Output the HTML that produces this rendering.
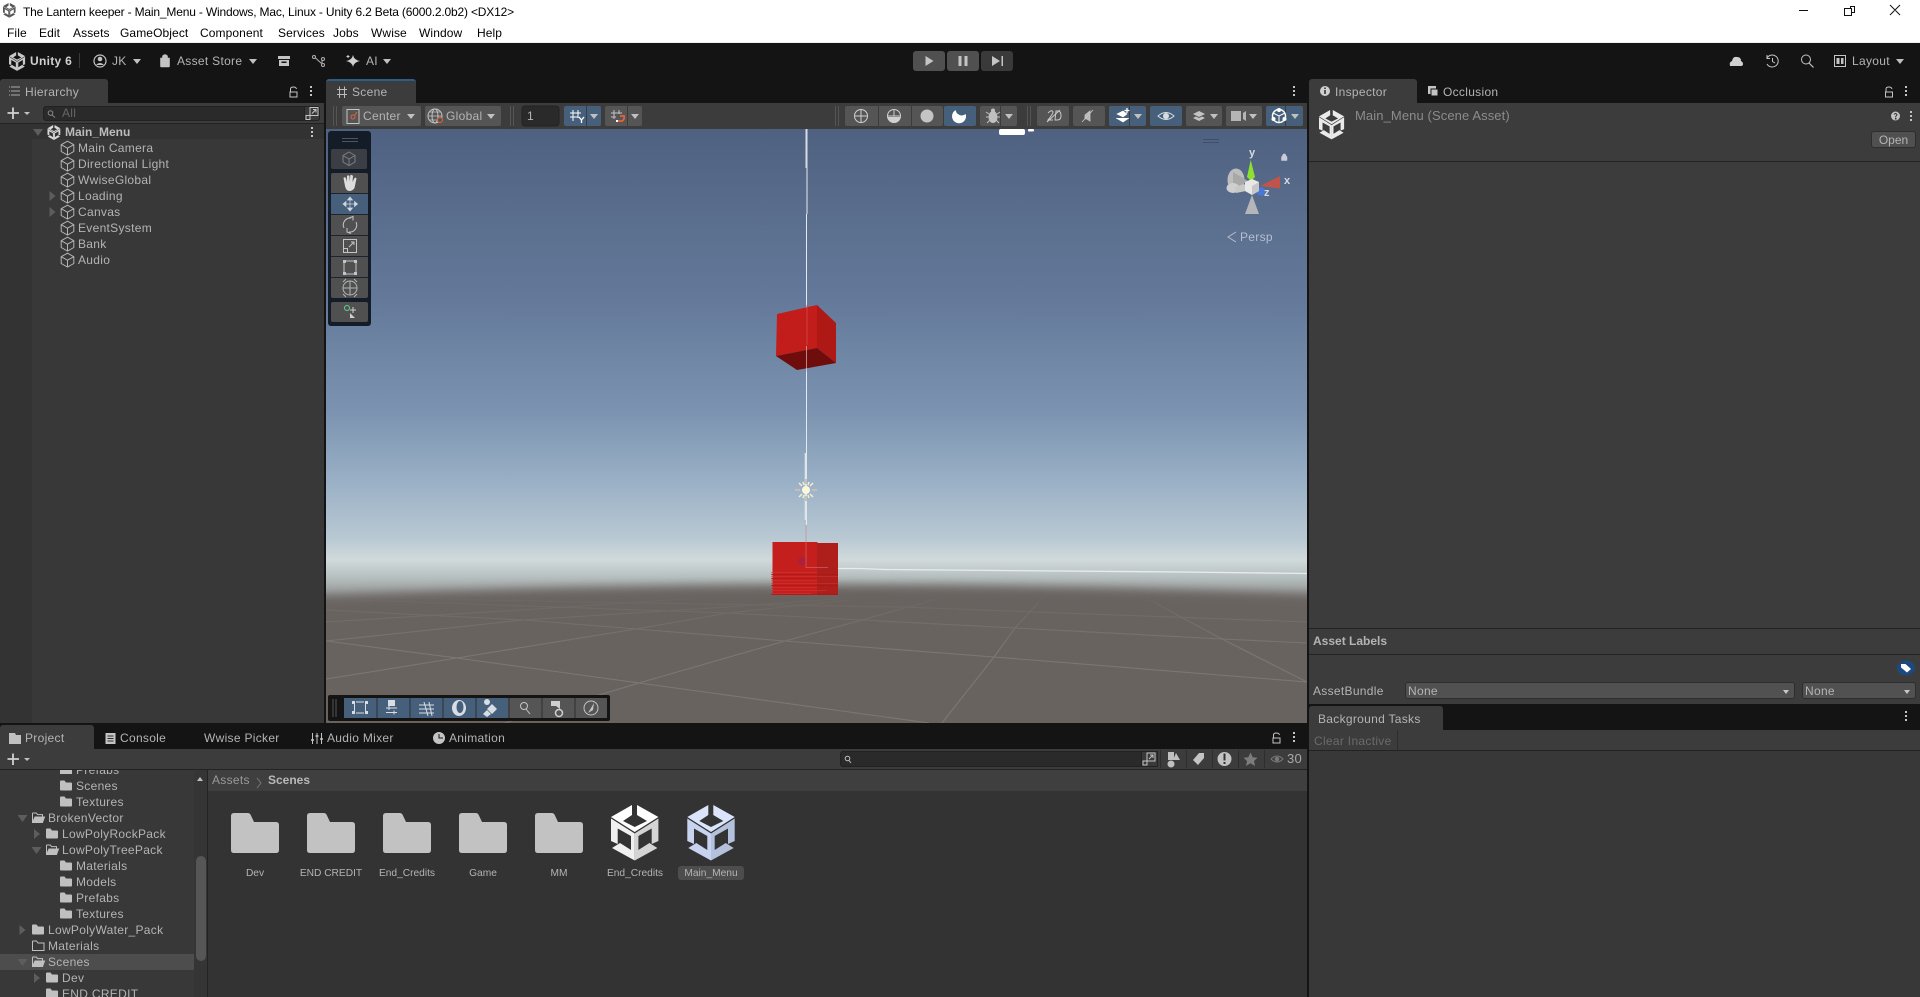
<!DOCTYPE html>
<html><head><meta charset="utf-8"><title>Unity</title>
<style>
html,body{margin:0;padding:0;width:1920px;height:997px;overflow:hidden;background:#141414}
body{position:relative;font:12px/16px "Liberation Sans",sans-serif;color:#b4b4b4}
.b{position:absolute}
.t{position:absolute;white-space:nowrap;line-height:16px;height:16px;letter-spacing:.3px}
.k{color:#000;letter-spacing:.1px}
.g{top:866px;font-size:10.2px;letter-spacing:0;width:100px;text-align:center}
svg{position:absolute;left:0;top:0}
</style></head><body>
<div class="b" style="left:0;top:0;width:1920px;height:42px;background:#fff"></div>
<div class="b" style="left:0;top:42px;width:1920px;height:1px;background:#f0f0f0"></div>
<!-- hierarchy -->
<div class="b" style="left:0;top:79px;width:108px;height:24px;background:#3c3c3c;border-radius:3px 3px 0 0"></div>
<div class="b" style="left:0;top:103px;width:324px;height:620px;background:#383838"></div>
<div class="b" style="left:0;top:103px;width:324px;height:20px;background:#3c3c3c"></div>
<div class="b" style="left:0;top:123px;width:324px;height:1px;background:#232323"></div>
<div class="b" style="left:0;top:139px;width:32px;height:584px;background:#333"></div>
<div class="b" style="left:0;top:124px;width:324px;height:15px;background:#323232"></div>
<div class="b" style="left:43px;top:106px;width:277px;height:15px;background:#2a2a2a;border:1px solid #222;box-sizing:border-box;border-radius:3px"></div>
<div class="b" style="left:304px;top:106px;width:16px;height:15px;background:#3a3a3a;border:1px solid #222;box-sizing:border-box;border-radius:0 3px 3px 0"></div>
<!-- scene tab -->
<div class="b" style="left:326px;top:79px;width:90px;height:24px;background:#3c3c3c;border-radius:3px 3px 0 0;border-top:2px solid #2c5d87;box-sizing:border-box"></div>
<div class="b" style="left:326px;top:103px;width:981px;height:26px;background:#3c3c3c"></div>
<!-- project -->
<div class="b" style="left:0;top:725px;width:94px;height:24px;background:#3c3c3c;border-radius:3px 3px 0 0"></div>
<div class="b" style="left:0;top:749px;width:1307px;height:20px;background:#3c3c3c"></div>
<div class="b" style="left:0;top:769px;width:1307px;height:1px;background:#232323"></div>
<div class="b" style="left:0;top:770px;width:208px;height:227px;background:#383838"></div>
<div class="b" style="left:194px;top:770px;width:13px;height:227px;background:#353535"></div>
<div class="b" style="left:207px;top:770px;width:1px;height:227px;background:#232323"></div>
<div class="b" style="left:208px;top:770px;width:1099px;height:21px;background:#3f3f3f"></div>
<div class="b" style="left:208px;top:791px;width:1099px;height:206px;background:#333"></div>
<div class="b" style="left:0;top:954px;width:194px;height:16px;background:#4d4d4d"></div>
<div class="b" style="left:196px;top:856px;width:10px;height:105px;background:#565656;border-radius:5px"></div>
<div class="b" style="left:840px;top:751px;width:318px;height:16px;background:#2a2a2a;border:1px solid #222;box-sizing:border-box;border-radius:3px"></div>
<div class="b" style="left:1141px;top:751px;width:17px;height:16px;background:#3a3a3a;border:1px solid #222;box-sizing:border-box"></div>
<div class="b" style="left:678px;top:866px;width:66px;height:14px;background:#4d4d4d;border-radius:3px"></div>
<!-- inspector -->
<div class="b" style="left:1309px;top:79px;width:108px;height:24px;background:#3c3c3c;border-radius:3px 3px 0 0"></div>
<div class="b" style="left:1309px;top:103px;width:611px;height:601px;background:#3c3c3c"></div>
<div class="b" style="left:1309px;top:161px;width:611px;height:1px;background:#232323"></div>
<div class="b" style="left:1309px;top:628px;width:611px;height:1px;background:#232323"></div>
<div class="b" style="left:1309px;top:654px;width:611px;height:1px;background:#232323"></div>
<div class="b" style="left:1871px;top:131px;width:45px;height:17px;background:#505050;border:1px solid #2e2e2e;box-sizing:border-box;border-radius:3px"></div>
<div class="b" style="left:1405px;top:682px;width:390px;height:17px;background:#515151;border:1px solid #2e2e2e;box-sizing:border-box;border-radius:3px"></div>
<div class="b" style="left:1802px;top:682px;width:114px;height:17px;background:#515151;border:1px solid #2e2e2e;box-sizing:border-box;border-radius:3px"></div>
<div class="b" style="left:1309px;top:706px;width:134px;height:24px;background:#3c3c3c;border-radius:3px 3px 0 0"></div>
<div class="b" style="left:1309px;top:730px;width:611px;height:20px;background:#3c3c3c"></div>
<div class="b" style="left:1309px;top:750px;width:611px;height:1px;background:#232323"></div>
<div class="b" style="left:1397px;top:730px;width:1px;height:20px;background:#2c2c2c"></div>
<div class="b" style="left:1309px;top:751px;width:611px;height:246px;background:#383838"></div>

<!-- SCENE -->
<svg width="1920" height="997" viewBox="0 0 1920 997">
<defs>
<linearGradient id="sky" x1="0" y1="129" x2="0" y2="600" gradientUnits="userSpaceOnUse">
<stop offset="0" stop-color="#4f6180"/><stop offset=".36" stop-color="#64799a"/><stop offset=".6" stop-color="#7b93b0"/><stop offset=".75" stop-color="#9ab0c6"/><stop offset=".87" stop-color="#b9c9d3"/><stop offset=".915" stop-color="#d0dadb"/><stop offset=".95" stop-color="#b8c1c1"/><stop offset="1" stop-color="#8e8f8e"/>
</linearGradient>
<linearGradient id="fade" x1="0" y1="592" x2="0" y2="650" gradientUnits="userSpaceOnUse"><stop offset="0" stop-color="#000"/><stop offset=".25" stop-color="#555"/><stop offset="1" stop-color="#fff"/></linearGradient>
<mask id="gm" maskUnits="userSpaceOnUse" x="326" y="580" width="981" height="143"><rect x="326" y="580" width="981" height="143" fill="url(#fade)"/></mask>
<filter id="bl" x="-5%" y="-20%" width="110%" height="140%"><feGaussianBlur stdDeviation="5"/></filter>
<clipPath id="sc"><rect x="326" y="129" width="981" height="594"/></clipPath>
<g id="cube" fill="none" stroke="#b4b4b4" stroke-width="1"><path d="M7 .7 13.3 4.2V11L7 14.5.7 11V4.2ZM.7 4.2 7 7.7 13.3 4.2M7 7.7V14.5"/></g>
<path id="folder" d="M0 1.5Q0 .5 1 .5H4.5L6 2.5H11Q12 2.5 12 3.5V9.5Q12 10.5 11 10.5H1Q0 10.5 0 9.5Z" fill="#c0c0c0"/>
<g id="ofolder"><path d="M.5 1.5Q.5 1 1 1H4.3L5.6 2.6H10.5V4.5M.5 1.5V10.5H10.5L12.5 5H3L.5 10.5" fill="none" stroke="#c0c0c0"/><path d="M3 5H12.5L10.5 10.5H1Z" fill="#c0c0c0"/></g>
<path id="big" d="M3 0H17Q18.5 0 19.5 1.5L23 9H45Q48 9 48 12V37Q48 40 45 40H3Q0 40 0 37V3Q0 0 3 0Z" fill="#c2c2c2"/>
<path id="tr" d="M0 -5 6 0 0 5Z" fill="#5d5d5d"/>
<path id="trd" d="M-5 -3H5L0 4Z" fill="#5d5d5d"/>
<path id="dn" d="M-4 -2H4L0 3Z" fill="#c0c0c0"/>
<g id="dots" fill="#c4c4c4"><rect x="-1" y="-5" width="2" height="2"/><rect x="-1" y="-1" width="2" height="2"/><rect x="-1" y="3" width="2" height="2"/></g>
<g id="lock" fill="none" stroke="#c4c4c4"><rect x="-3.5" y="0" width="7" height="5"/><path d="M-3 0V-3Q-3 -5 0 -5Q2.5 -5 3 -3"/></g>
<g id="logo"><path d="M21 0 0 12 23.7 27 47.4 12 26 0V10L36 16 23.7 22 12 16 21 10Z"/><path d="M0 13.500 23.700 28.500V55.500L1 43 9 38 20 45V31L6.700 23.500V39L0 36Z"/><path d="M47.400 13.500 23.700 28.500V55.500L46.400 43 38.400 38 27.400 45V31L40.700 23.500V39L47.400 36Z"/></g>
<g id="expand" fill="none" stroke="#c4c4c4"><rect x="-2" y="-6" width="8" height="8"/><rect x="-6" y="2" width="4" height="4"/><path d="M0 0 3.5 -3.5M1 -4H4V-1"/></g>
</defs>

<g clip-path="url(#sc)">
<rect x="326" y="129" width="981" height="594" fill="url(#sky)"/>
<path d="M300 597Q816 574 1330 595V740H300Z" fill="#696460" filter="url(#bl)"/>
<g fill="none" stroke="#7b7773" stroke-width="1.1" mask="url(#gm)">
<path d="M326 641 457 658 639 683 929 723"/>
<path d="M326 610 524 620 636 629 785 641 994 657 1307 682"/>
<path d="M326 599 728 613 862 620 1015 628 1222 639 1307 643"/>
<path d="M326 596 575 602 900 607 1307 622"/>
<path d="M326 679 457 658 636 629 728 613 850 600"/>
<path d="M326 641 524 620 728 607 860 597"/>
<path d="M326 622 520 610 700 598"/>
<path d="M505 723 639 683 785 641 862 620 958 593"/>
<path d="M942 723 994 657 1015 628 1047 593"/>
<path d="M1307 682 1222 639 1168 610 1136 592"/>
</g>
<path d="M807 129V214M806.500 214V525" stroke="#e6e9ee" stroke-width="1" fill="none"/>
<path d="M806.500 129V168" stroke="#d8dce2" stroke-width="2"/>
<path d="M805.700 453V520" stroke="#dfe5ea" stroke-width="2"/>
<path d="M828 568.500 860 568.500 885 569.500 1000 570.500 1180 572 1307 573.500" stroke="#e9ebeb" stroke-width="1.300" fill="none"/>
<rect x="999" y="129" width="26" height="6" rx="2" fill="#fff"/><rect x="1028" y="129" width="6" height="2.500" rx="1" fill="#fff"/>
<!-- cube top -->
<path d="M777 314 817 305V348L776 356Z" fill="#c21d1a"/><path d="M817 305 836 323V363L817 348Z" fill="#ae1815"/><path d="M776 356 817 348 836 363 797 370Z" fill="#6e0d0b"/>
<path d="M807 305V345" stroke="#ce4a48" stroke-width="1.200" opacity=".7"/><path d="M806.500 346V372" stroke="#dcb9b9" stroke-width="1" opacity=".7"/>
<!-- cube bottom -->
<rect x="772.500" y="542" width="45" height="53" fill="#c41f1d"/><rect x="817" y="543" width="21" height="52" fill="#ae1e1b"/>
<g fill="#d93733" opacity=".5"><rect x="771" y="572" width="46" height="1"/><rect x="771" y="576" width="67" height="1"/><rect x="771" y="580" width="46" height="1"/><rect x="771" y="583" width="67" height="1"/><rect x="771" y="587" width="46" height="1"/><rect x="771" y="590" width="55" height="1"/><rect x="771" y="593" width="40" height="1"/></g>
<g fill="#a81815" opacity=".7"><rect x="771" y="574" width="67" height="1"/><rect x="771" y="578" width="46" height="1"/><rect x="771" y="585" width="67" height="1"/><rect x="771" y="594" width="67" height="1"/></g>
<circle cx="802" cy="561" r="4" fill="#a52145" opacity=".8"/>
<path d="M806 525V567.500H828" stroke="#d4787a" fill="none" opacity=".55"/>
<!-- sun -->
<g stroke="#c4c2ae" stroke-width="2"><path d="M806 479V484M806 496V501M795 490H800M812 490H817"/></g>
<g stroke="#f1eed4" stroke-width="1.500"><path d="M799 483 802 486M813 483 810 486M799 497 802 494M813 497 810 494M803 482 804 485M809 482 808 485M803 498 804 495M809 498 808 495"/></g>
<circle cx="806" cy="490" r="4" fill="#fff7d8"/>
<!-- gizmo -->
<path d="M1203 139.500H1219M1203 142.500H1219" stroke="#3f4f66" stroke-width="1"/>
<path d="M1247 177 1250.700 160 1255 177 1251 181Z" fill="#8ce02e"/>
<ellipse cx="1236" cy="180" rx="8.500" ry="11.500" fill="#bdbdbd"/>
<path d="M1233 172 1248 181 1233 189Z" fill="#a8a8a8"/>
<ellipse cx="1233" cy="188" rx="6.500" ry="5" fill="#cfcfcf"/>
<path d="M1235 187 1246 184 1246 191 1236 193Z" fill="#c8c8c8"/>
<path d="M1280 176 1260 186 1280 188.500Z" fill="#c0534a"/>
<circle cx="1261" cy="191.500" r="4.300" fill="#4a78d8"/>
<path d="M1245 214H1259L1252 195Z" fill="#b4b6ba"/>
<path d="M1245 182 1252 179 1259 182V191L1252 195 1245 191Z" fill="#e8e8e8"/>
<path d="M1259 182V191L1252 195V186Z" fill="#c7c7c7"/>
<path d="M1281.500 156.500H1287V160.500H1281.500ZM1282.500 156.500V155Q1284.200 152.500 1286 155V156.500" fill="#c9ced6" stroke="#c9ced6" stroke-width=".5"/>
<path d="M1236 232 1228 237 1236 242" fill="none" stroke="#b5bfce" stroke-width="1"/>
</g>

<!-- window buttons -->
<path d="M1799 10.500H1808M1850.500 8V6.500H1854.500V12.500H1852M1844.500 8.500H1851.500V15.500H1844.500ZM1890 5 1900 15M1900 5 1890 15" stroke="#111" stroke-width="1" fill="none"/>
<!-- title icon -->
<use href="#logo" transform="translate(3 3) scale(.265)" fill="#555"/>
<!-- top toolbar icons -->
<use href="#logo" transform="translate(9 52) scale(.34)" fill="#c8c8c8"/>
<rect x="79" y="53" width="1" height="15" fill="#3a3a3a"/>
<circle cx="100" cy="61" r="6" fill="none" stroke="#c4c4c4" stroke-width="1.200"/><circle cx="100" cy="59" r="2.300" fill="#c4c4c4"/><path d="M96 65Q100 61 104 65" fill="#c4c4c4"/>
<use href="#dn" x="137" y="61"/>
<path d="M160.500 58H169.500V66Q169.500 67 168.500 67H161.500Q160.500 67 160.500 66ZM162.500 58V56Q165 53 167.500 56V58" fill="#c4c4c4" stroke="#c4c4c4" stroke-width=".6"/>
<use href="#dn" x="253" y="61"/>
<path d="M278 56H290V59H278ZM279 60H289V66H279Z" fill="#c4c4c4"/><rect x="281.500" y="61.500" width="5" height="1.500" fill="#141414"/>
<g fill="none" stroke="#b0b0b0"><circle cx="314" cy="57" r="1.500"/><circle cx="323" cy="59" r="1.500"/><circle cx="323" cy="65" r="1.500"/><path d="M315.500 58 321.500 63.500M322 60.500V63"/></g>
<path d="M353 55Q354 60 360 61Q354 62 353 67Q352 62 346 61Q352 60 353 55Z" fill="#d0d0d0"/><path d="M348 55V58M346.500 56.500H349.500" stroke="#d0d0d0"/>
<use href="#dn" x="387" y="61"/>
<!-- play -->
<rect x="913" y="51" width="32" height="20" rx="3" fill="#505050"/><rect x="947" y="51" width="32" height="20" rx="3" fill="#505050"/><rect x="981" y="51" width="32" height="20" rx="3" fill="#3a3a3a"/>
<path d="M925.500 56 933.500 61 925.500 66Z" fill="#c4c4c4"/><path d="M958.500 56H961.500V66H958.500ZM964.500 56H967.500V66H964.500Z" fill="#c4c4c4"/><path d="M992 56 1000 61 992 66ZM1001.500 56H1003V66H1001.500Z" fill="#c4c4c4"/>
<!-- right toolbar -->
<path d="M1730 66Q1729 62 1732 61Q1733 56 1737 57Q1741 57 1741 61Q1743 62 1743 64Q1743 66 1741 66Z" fill="#d0d0d0"/>
<path d="M1767 58A6 6 0 1 1 1767 64M1767 55V58.500H1770M1772.500 58V61.500L1775 63" stroke="#c4c4c4" fill="none"/>
<circle cx="1806" cy="59.500" r="4.500" fill="none" stroke="#c4c4c4"/><path d="M1809 63 1813.500 67.500" stroke="#c4c4c4" stroke-width="1.200"/>
<rect x="1834.500" y="55.500" width="11" height="11" fill="none" stroke="#c4c4c4"/><path d="M1836.500 58H1839.500V64H1836.500ZM1841 58H1843.500V64H1841Z" fill="#c4c4c4"/>
<use href="#dn" x="1900" y="61"/>

<!-- hierarchy icons -->
<path d="M11 87H20M11 91H20M11 95H20" stroke="#aaa"/><path d="M9 87H10M9 91H10M9 95H10" stroke="#aaa"/>
<use href="#lock" x="293.500" y="92"/><use href="#dots" x="311" y="91"/>
<path d="M13 107.500V119M7.500 113H19" stroke="#d0d0d0" stroke-width="1.800"/><path d="M24 112H30L27 115Z" fill="#c0c0c0"/>
<circle cx="50.500" cy="113" r="2.300" fill="none" stroke="#888"/><path d="M52 115 55 117.500" stroke="#888"/>
<use href="#expand" x="312" y="113.500"/>
<use href="#trd" x="38" y="132"/>
<use href="#logo" transform="translate(47.500 125) scale(.27)" fill="#d8d8d8"/>
<use href="#dots" x="312" y="132"/>
<use href="#cube" x="60.500" y="140.500"/><use href="#cube" x="60.500" y="156.500"/><use href="#cube" x="60.500" y="172.500"/><use href="#cube" x="60.500" y="188.500"/><use href="#cube" x="60.500" y="204.500"/><use href="#cube" x="60.500" y="220.500"/><use href="#cube" x="60.500" y="236.500"/><use href="#cube" x="60.500" y="252.500"/>
<use href="#tr" x="49.500" y="196"/><use href="#tr" x="49.500" y="212"/>

<!-- scene tab + toolbar -->
<path d="M339.500 86.500V98M344.500 86.500V98M337 89.500H347M337 94.500H347" stroke="#bbb"/>
<use href="#dots" x="1294" y="91"/>
<path d="M333.500 106V126M336.500 106V126M510.500 106V126M513.500 106V126M835.500 106V126M838.500 106V126M1027.500 106V126M1030.500 106V126" stroke="#555"/>
<g fill="#555"><rect x="342" y="106" width="79" height="20" rx="2"/><rect x="425" y="106" width="76" height="20" rx="2"/><rect x="605" y="106" width="37" height="20" rx="2"/><rect x="845" y="106" width="98" height="20" rx="2"/><rect x="980" y="106" width="37" height="20" rx="2"/><rect x="1037" y="106" width="32" height="20" rx="2"/><rect x="1073" y="106" width="32" height="20" rx="2"/><rect x="1186" y="106" width="36" height="20" rx="2"/><rect x="1226" y="106" width="36" height="20" rx="2"/></g>
<g fill="#46607c"><rect x="564" y="106" width="37" height="20" rx="2"/><rect x="944" y="106" width="32" height="20" rx="2"/><rect x="1109" y="106" width="37" height="20" rx="2"/><rect x="1150" y="106" width="32" height="20" rx="2"/><rect x="1266" y="106" width="37" height="20" rx="2"/></g>
<rect x="522" y="106" width="37" height="20" rx="3" fill="#2a2a2a" stroke="#222"/>
<path d="M586.500 106V126M627.500 106V126M878.500 106V126M911.500 106V126M1000.500 106V126M1129.500 106V126M1285.500 106V126" stroke="#3c3c3c"/>
<!-- center / global -->
<rect x="347" y="109.500" width="12" height="14" fill="none" stroke="#c4c4c4"/><circle cx="353" cy="117" r="2" fill="none" stroke="#e5623a"/><path d="M355 115 357 112" stroke="#e5623a"/>
<use href="#dn" x="411" y="116"/>
<circle cx="435" cy="116" r="7" fill="none" stroke="#c4c4c4"/><ellipse cx="435" cy="116" rx="3" ry="7" fill="none" stroke="#c4c4c4"/><path d="M428 116H442M429 112H441M429 120H441" stroke="#c4c4c4" stroke-width=".8"/><circle cx="440" cy="120" r="2.500" fill="#555" stroke="#e5623a"/>
<use href="#dn" x="491" y="116"/>
<g stroke="#fff"><path d="M573 110V121M578 110V118M570 113H581M570 117H578"/><path d="M579 117 581.500 120 584 117M581.500 120V123" fill="none" stroke-width="1.300"/></g>
<use href="#dn" x="594" y="116"/>
<g stroke="#c4c4c4"><path d="M614 110V119M619 110V114M611 113H622M611 117H616"/></g><path d="M620 116H624Q625 119 622 121H618" fill="none" stroke="#e5623a" stroke-width="1.800"/><rect x="616" y="120" width="2" height="2" fill="#fff"/>
<use href="#dn" x="635" y="116"/>
<!-- shading -->
<g fill="none" stroke="#d0d0d0"><circle cx="861" cy="116" r="6.500"/><path d="M854.500 116H867.500M861 109.500V122.500"/><circle cx="894" cy="116" r="6.500"/><path d="M887.500 116H900.500M894 109.500V116"/></g>
<path d="M888 117H900A6 6 0 0 1 888 117Z" fill="#d0d0d0"/>
<circle cx="927" cy="116" r="6.500" fill="#c4c4c4"/>
<path d="M958 109A7 7 0 1 0 966 116A6 6 0 0 1 958 109Z" fill="#fff" transform="rotate(-20 960 116)"/>
<!-- bug -->
<ellipse cx="993" cy="117" rx="4.500" ry="6" fill="#c0c0c0"/><circle cx="993" cy="110.500" r="2" fill="#c0c0c0"/><path d="M986 112 989 114M1000 112 997 114M986 117H989M1000 117H997M987 123 990 120M999 123 996 120" stroke="#c0c0c0"/>
<use href="#dn" x="1009" y="116"/>
<!-- 2D -->
<path d="M1048 113Q1052 109 1053 112Q1053 114 1048 120H1053M1056 111H1058Q1061 111 1061 116Q1061 120 1057 120H1055ZM1047 122 1060 110" fill="none" stroke="#c8c8c8"/>
<path d="M1085 115 1090 111V121L1087 119H1085ZM1082 122 1093 110" fill="#b8b8b8" stroke="#c8c8c8" stroke-width=".8"/>
<!-- fx -->
<path d="M1117 114 1123 117 1127 114 1123 111ZM1116 118 1123 122 1129 118" fill="#fff" stroke="#fff" stroke-width=".6"/><path d="M1127 108V113M1124.500 110.500H1129.500" stroke="#fff" stroke-width="1.300"/>
<use href="#dn" x="1138" y="116"/>
<path d="M1158 116Q1166 109 1174 116Q1166 123 1158 116Z" fill="none" stroke="#d8dde4"/><circle cx="1166" cy="116" r="3" fill="#d8dde4"/>
<path d="M1193 114 1199 111 1205 114 1199 117ZM1193 118 1196 116.500 1199 118 1202 116.500 1205 118 1199 121Z" fill="#c4c4c4"/>
<use href="#dn" x="1214" y="116"/>
<path d="M1231 111H1241V121H1231ZM1243 113 1246 111V121L1243 119Z" fill="#b4b4b4"/>
<use href="#dn" x="1253" y="116"/>
<circle cx="1279" cy="116" r="6.500" fill="none" stroke="#fff" stroke-width="1.500"/><path d="M1273 113 1279 116 1285 113M1279 116V122" stroke="#fff" fill="none"/><circle cx="1279" cy="110" r="2" fill="#fff"/><circle cx="1273.500" cy="119" r="2" fill="#fff"/><circle cx="1284.500" cy="119" r="2" fill="#fff"/>
<use href="#dn" x="1295" y="116"/>

<!-- tool overlay -->
<rect x="328" y="131" width="43" height="195" rx="3" fill="#141c28"/>
<path d="M342 138.500H358M342 141.500H358" stroke="#4a5568"/>
<rect x="331" y="149" width="36" height="20" rx="2" fill="#3b3f45"/>
<path d="M349 152 355 155.500V162L349 165.500 343 162V155.500ZM343 155.500 349 159 355 155.500M349 159V165.500" fill="none" stroke="#7d7d7d"/>
<rect x="331" y="173" width="37" height="125" rx="2" fill="#505050"/><rect x="331" y="194" width="37" height="20" fill="#46607c"/>
<path d="M331 193.500H368M331 214.500H368M331 235.500H368M331 256.500H368M331 277.500H368" stroke="#1c2430"/>
<path d="M345 186 343.500 178Q344.500 176.500 346 178L347 182V176Q348 174.500 349.500 176V181.500L350.500 175Q352 174.500 353 176L352.500 182 354.500 178Q356 177 356.500 178.500L354.500 188Q352.500 191 349.500 191Q346 191 345 186Z" fill="#dcdcdc"/>
<path d="M350 197 347.500 200H352.500ZM350 211 347.500 208H352.500ZM343 204 346 201.500V206.500ZM357.500 204 354.500 201.500V206.500ZM346 204H355M350 200V208" fill="#cfd6df" stroke="#cfd6df" stroke-width=".7"/>
<path d="M344 228A7 7 0 0 1 351 218M356 222A7 7 0 0 1 349 232M349 218 353 216.500V220.500M351 233.500 347 232V228" fill="none" stroke="#c4c4c4"/>
<rect x="343.500" y="239.500" width="13" height="13" fill="none" stroke="#c4c4c4"/><rect x="343.500" y="248.500" width="4" height="4" fill="none" stroke="#c4c4c4"/><path d="M349 247 354 242M351 242H354V245" stroke="#c4c4c4" fill="none"/>
<path d="M346 261H354M346 274H354M344 263V272M356 263V272" stroke="#c4c4c4"/><g fill="#c4c4c4"><rect x="343" y="260" width="3" height="3"/><rect x="354" y="260" width="3" height="3"/><rect x="343" y="272" width="3" height="3"/><rect x="354" y="272" width="3" height="3"/></g>
<circle cx="350" cy="288" r="7" fill="none" stroke="#b4b4b4"/><path d="M343 288H357M350 281V295" stroke="#b4b4b4"/><path d="M343 282 346 279M357 282 354 279M343 294 346 297M357 294 354 297" stroke="#b4b4b4"/>
<rect x="331" y="302" width="37" height="20" rx="2" fill="#505050"/>
<circle cx="347" cy="308" r="2.500" fill="none" stroke="#5ed38c"/><path d="M353 307V313M350 310H356" stroke="#d0d0d0"/><path d="M350 313 355 318H350Z" fill="#d0d0d0"/>

<!-- bottom overlay -->
<rect x="328" y="695" width="282" height="26" rx="2" fill="#141414"/>
<path d="M333 699V717M336 699V717" stroke="#555"/>
<rect x="344" y="698" width="164" height="20" fill="#46607c"/><rect x="508" y="698" width="99" height="20" fill="#555"/>
<path d="M377 698V718M410 698V718M443 698V718M476 698V718M509 698V718M542 698V718M575 698V718" stroke="#2e2e2e"/>
<g fill="none" stroke="#d8dde4">
<path d="M356 702H364M356 713H364M354.500 704V711M365.500 704V711"/>
<path d="M386 708H397M386 712.500H397M389 706V710M394 710.500V714.500"/>
<path d="M419 705H434M419 709H434M419 713H434M424 702 428 716M429 702 432 716"/>
</g>
<rect x="352" y="701" width="3" height="3" fill="#d8dde4"/><rect x="365" y="701" width="3" height="3" fill="#d8dde4"/><rect x="352" y="711" width="3" height="3" fill="#d8dde4"/><rect x="365" y="711" width="3" height="3" fill="#d8dde4"/>
<rect x="388" y="700" width="7" height="6" fill="#d8dde4"/>
<ellipse cx="459" cy="708" rx="7" ry="8" fill="#d8dde4"/><ellipse cx="460" cy="707" rx="3.500" ry="6" fill="#46607c"/>
<circle cx="487" cy="702" r="3" fill="#d8dde4"/><path d="M492 704 497 709 492 714 487 709Z M487 710 491 714 487 717 483 714Z" fill="#d8dde4"/>
<circle cx="524" cy="706" r="3.500" fill="none" stroke="#c4c4c4"/><path d="M526 709 530 714" stroke="#c4c4c4"/>
<path d="M551 701H560V709L556 706H551Z" fill="#d0d0d0"/><circle cx="559" cy="713" r="3.500" fill="none" stroke="#d0d0d0" stroke-width="1.500"/>
<circle cx="591" cy="708" r="7" fill="none" stroke="#c4c4c4"/><path d="M588 713 594 703 593 710Z" fill="#c4c4c4"/>

<!-- project icons -->
<path d="M9 733H15L16 735H21V744H9Z" fill="#c0c0c0"/>
<path d="M105.500 733H115.500V744H105.500Z" fill="#c4c4c4"/><path d="M107.500 736H113.500M107.500 738.500H113.500M107.500 741H113.500" stroke="#2b2b2b"/>
<path d="M312.500 733V744M317 733V744M321.500 733V744" stroke="#c4c4c4"/><path d="M311 740H314M315.500 736H318.500M320 739H323" stroke="#c4c4c4" stroke-width="1.500"/>
<circle cx="439" cy="738" r="6" fill="#c4c4c4"/><path d="M439 734V738H443" fill="none" stroke="#141414"/>
<use href="#lock" x="1276.500" y="738"/><use href="#dots" x="1294" y="737"/>
<path d="M13 753.500V765M7.500 759H19" stroke="#d0d0d0" stroke-width="1.800"/><path d="M24 758H30L27 761Z" fill="#c0c0c0"/>
<circle cx="847.500" cy="758.500" r="2.300" fill="none" stroke="#bbb"/><path d="M849 760.500 851 763" stroke="#bbb"/>
<use href="#expand" x="1149" y="759"/>
<path d="M1160.500 750V768M1186.500 750V768M1212.500 750V768M1238.500 750V768M1264.500 750V768" stroke="#2e2e2e"/>
<rect x="1168" y="752" width="6" height="8" fill="#c0c0c0"/><circle cx="1171" cy="764" r="3.500" fill="#c0c0c0"/><path d="M1176 753 1180 760H1173Z" fill="#c0c0c0"/>
<path d="M1193 760 1199 753H1204V758L1198 765Z" fill="#c4c4c4"/>
<circle cx="1224.500" cy="759" r="7" fill="#c4c4c4"/><rect x="1223.500" y="753.500" width="2" height="7" fill="#333"/><rect x="1223.500" y="762" width="2" height="2" fill="#333"/>
<path d="M1250.500 752.500 1252.700 757.300 1257.500 757.800 1254 761 1255 766 1250.500 763.300 1246 766 1247 761 1243.500 757.800 1248.300 757.300Z" fill="#7c7c7c"/>
<path d="M1271 759Q1277 753 1283 759Q1277 765 1271 759Z" fill="none" stroke="#787878"/><circle cx="1277" cy="759" r="2.300" fill="#787878"/>
<path d="M197 781H203L200 777Z" fill="#c0c0c0"/>

<!-- tree icons -->
<g>
<rect x="60" y="770" width="12" height="4" fill="#c0c0c0"/>
<use href="#folder" x="60" y="780"/><use href="#folder" x="60" y="796"/>
<use href="#trd" x="22.500" y="818"/><use href="#ofolder" x="32" y="812"/>
<use href="#tr" x="34" y="834"/><use href="#folder" x="46" y="828"/>
<use href="#trd" x="36.500" y="850"/><use href="#ofolder" x="46" y="844"/>
<use href="#folder" x="60" y="860"/><use href="#folder" x="60" y="876"/><use href="#folder" x="60" y="892"/><use href="#folder" x="60" y="908"/>
<use href="#tr" x="19.500" y="930"/><use href="#folder" x="32" y="924"/>
<path d="M32.500 941.500Q32.500 941 33 941H36.500L38 943H44V950.500H32.500Z" fill="none" stroke="#c0c0c0"/>
<use href="#trd" x="22.500" y="962"/><use href="#ofolder" x="32" y="956"/>
<use href="#tr" x="34" y="978"/><use href="#folder" x="46" y="972"/>
<use href="#folder" x="46" y="988"/>
</g>
<path d="M257 778 261 783 257 788" fill="none" stroke="#777"/>
<!-- grid -->
<use href="#big" x="231" y="813"/><use href="#big" x="307" y="813"/><use href="#big" x="383" y="813"/><use href="#big" x="459" y="813"/><use href="#big" x="535" y="813"/>
<g transform="translate(611 805)"><path d="M21 0 0 12 23.700 27 47.400 12 26 0V10L36 16 23.700 22 12 16 21 10Z" fill="#fff"/><path d="M0 13.500 23.700 28.500V55.500L1 43 9 38 20 45V31L6.700 23.500V39L0 36Z" fill="#f0f0f0"/><path d="M47.400 13.500 23.700 28.500V55.500L46.400 43 38.400 38 27.400 45V31L40.700 23.500V39L47.400 36Z" fill="#d4d4d4"/></g>
<g transform="translate(687.300 805)"><path d="M21 0 0 12 23.700 27 47.400 12 26 0V10L36 16 23.700 22 12 16 21 10Z" fill="#dae4fb"/><path d="M0 13.500 23.700 28.500V55.500L1 43 9 38 20 45V31L6.700 23.500V39L0 36Z" fill="#c8d4ef"/><path d="M47.400 13.500 23.700 28.500V55.500L46.400 43 38.400 38 27.400 45V31L40.700 23.500V39L47.400 36Z" fill="#b4c1dc"/></g>

<!-- inspector icons -->
<circle cx="1325" cy="91" r="5" fill="#d0d0d0"/><rect x="1324.200" y="90" width="1.600" height="4" fill="#333"/><rect x="1324.200" y="87.500" width="1.600" height="1.500" fill="#333"/>
<rect x="1428" y="86" width="8" height="8" fill="#c4c4c4"/><rect x="1431" y="89" width="7" height="7" fill="#c4c4c4" stroke="#141414"/>
<use href="#lock" x="1889" y="92"/><use href="#dots" x="1906" y="91"/>
<use href="#logo" transform="translate(1319 110) scale(.53)" fill="#eaeaea"/>
<circle cx="1895.500" cy="116" r="4.500" fill="#c4c4c4"/><rect x="1895" y="118" width="1.500" height="1.500" fill="#333"/><path d="M1894 114.500Q1895.500 112.500 1897 114.500Q1897 115.500 1895.700 116.500V117.500" fill="none" stroke="#333"/>
<use href="#dots" x="1911" y="116"/>
<ellipse cx="1906" cy="668" rx="9" ry="7.500" fill="#1c4a80"/>
<path d="M1901 664H1905.500L1911 669 1907 672.500 1901 667.500Z" fill="#fff"/>
<path d="M1783 690H1789L1786 694ZM1904 690H1910L1907 694Z" fill="#c8c8c8"/>
<use href="#dots" x="1906" y="716"/>
</svg>

<!-- TEXT -->
<div class="t k" style="left:23px;top:4px;letter-spacing:-.18px">The Lantern keeper - Main_Menu - Windows, Mac, Linux - Unity 6.2 Beta (6000.2.0b2) &lt;DX12&gt;</div>
<div class="t k" style="left:7px;top:25px">File</div><div class="t k" style="left:39px;top:25px">Edit</div><div class="t k" style="left:73px;top:25px">Assets</div><div class="t k" style="left:120px;top:25px">GameObject</div><div class="t k" style="left:200px;top:25px">Component</div><div class="t k" style="left:278px;top:25px">Services</div><div class="t k" style="left:333px;top:25px">Jobs</div><div class="t k" style="left:371px;top:25px">Wwise</div><div class="t k" style="left:419px;top:25px">Window</div><div class="t k" style="left:477px;top:25px">Help</div>

<div class="t" style="left:30px;top:53px;font-weight:bold;color:#d0d0d0">Unity 6</div>
<div class="t" style="left:112px;top:53px">JK</div><div class="t" style="left:177px;top:53px">Asset Store</div><div class="t" style="left:366px;top:53px">AI</div>
<div class="t" style="left:1852px;top:53px">Layout</div>

<div class="t" style="left:25px;top:84px">Hierarchy</div><div class="t" style="left:352px;top:84px">Scene</div>
<div class="t" style="left:1335px;top:84px">Inspector</div><div class="t" style="left:1443px;top:84px">Occlusion</div>
<div class="t" style="left:62px;top:105px;color:#666">All</div>

<div class="t" style="left:65px;top:124px;font-weight:bold;color:#bcbcbc;letter-spacing:0">Main_Menu</div>
<div class="t" style="left:78px;top:140px">Main Camera</div><div class="t" style="left:78px;top:156px">Directional Light</div><div class="t" style="left:78px;top:172px">WwiseGlobal</div><div class="t" style="left:78px;top:188px">Loading</div><div class="t" style="left:78px;top:204px">Canvas</div><div class="t" style="left:78px;top:220px">EventSystem</div><div class="t" style="left:78px;top:236px">Bank</div><div class="t" style="left:78px;top:252px">Audio</div>

<div class="t" style="left:363px;top:108px">Center</div><div class="t" style="left:446px;top:108px">Global</div><div class="t" style="left:527px;top:108px">1</div>

<div class="t" style="left:1249px;top:145px;color:#d6dbe2;font-weight:bold;font-size:11px">y</div><div class="t" style="left:1284px;top:173px;color:#d6dbe2;font-weight:bold;font-size:11px">x</div><div class="t" style="left:1264px;top:185px;color:#d6dbe2;font-weight:bold;font-size:11px">z</div>
<div class="t" style="left:1240px;top:229px;color:#b5bfce;font-size:12px">Persp</div>

<div class="t" style="left:25px;top:730px">Project</div><div class="t" style="left:120px;top:730px">Console</div><div class="t" style="left:204px;top:730px">Wwise Picker</div><div class="t" style="left:327px;top:730px">Audio Mixer</div><div class="t" style="left:449px;top:730px">Animation</div>
<div class="t" style="left:1287px;top:751px;color:#a8a8a8;font-size:13px">30</div>

<div class="b" style="left:60px;top:770px;width:130px;height:8px;overflow:hidden"><div class="t" style="left:16px;top:-8px">Prefabs</div></div>
<div class="t" style="left:76px;top:778px">Scenes</div><div class="t" style="left:76px;top:794px">Textures</div><div class="t" style="left:48px;top:810px">BrokenVector</div><div class="t" style="left:62px;top:826px">LowPolyRockPack</div><div class="t" style="left:62px;top:842px">LowPolyTreePack</div><div class="t" style="left:76px;top:858px">Materials</div><div class="t" style="left:76px;top:874px">Models</div><div class="t" style="left:76px;top:890px">Prefabs</div><div class="t" style="left:76px;top:906px">Textures</div><div class="t" style="left:48px;top:922px">LowPolyWater_Pack</div><div class="t" style="left:48px;top:938px">Materials</div><div class="t" style="left:48px;top:954px">Scenes</div><div class="t" style="left:62px;top:970px">Dev</div><div class="t" style="left:62px;top:986px">END CREDIT</div>

<div class="t" style="left:212px;top:772px;color:#999">Assets</div><div class="t" style="left:268px;top:772px;font-weight:bold;color:#b8b8b8;letter-spacing:0">Scenes</div>

<div class="t g" style="left:205px">Dev</div>
<div class="t g" style="left:281px">END CREDIT</div>
<div class="t g" style="left:357px">End_Credits</div>
<div class="t g" style="left:433px">Game</div>
<div class="t g" style="left:509px">MM</div>
<div class="t g" style="left:585px">End_Credits</div>
<div class="t g" style="left:661px">Main_Menu</div>

<div class="t" style="left:1355px;top:108px;color:#8c8c8c;font-size:13px;letter-spacing:.1px">Main_Menu (Scene Asset)</div>
<div class="t" style="left:1871px;top:132px;width:45px;text-align:center;letter-spacing:0">Open</div>
<div class="t" style="left:1313px;top:633px;font-weight:bold;letter-spacing:0">Asset Labels</div>
<div class="t" style="left:1313px;top:683px">AssetBundle</div>
<div class="t" style="left:1408px;top:683px">None</div><div class="t" style="left:1805px;top:683px">None</div>
<div class="t" style="left:1318px;top:711px">Background Tasks</div>
<div class="t" style="left:1314px;top:733px;color:#6a6a6a">Clear Inactive</div>
</body></html>
